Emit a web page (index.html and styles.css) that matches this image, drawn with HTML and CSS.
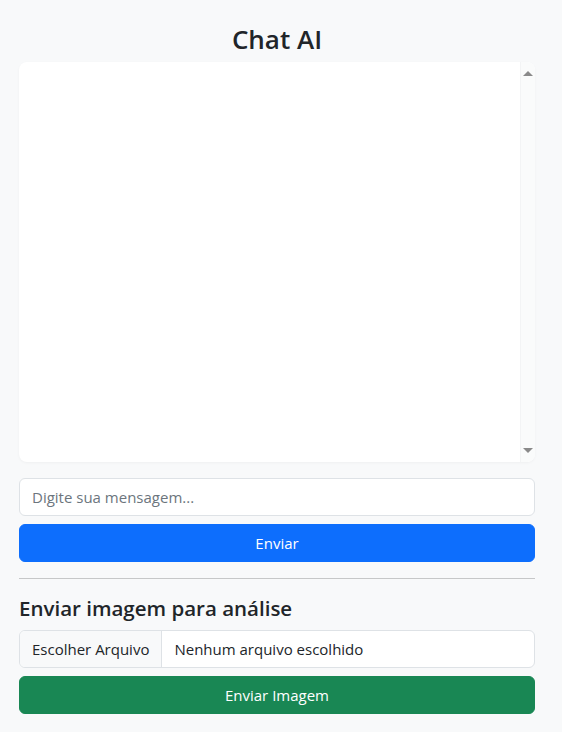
FILE: index.html
```html
<!DOCTYPE html>
<html lang="pt-BR">
<head>
<meta charset="utf-8">
<title>Chat AI</title>
<link rel="stylesheet" href="styles.css">
</head>
<body>
<main class="container">
  <h3 class="title">Chat AI</h3>
  <div class="chat-box">
    <div class="chat-messages"></div>
    <div class="scrollbar" aria-hidden="true">
      <span class="arrow arrow-up"></span>
      <span class="arrow arrow-down"></span>
    </div>
  </div>
  <input class="form-control" type="text" placeholder="Digite sua mensagem...">
  <button class="btn btn-primary">Enviar</button>
  <hr class="divider">
  <h5 class="subtitle">Enviar imagem para análise</h5>
  <div class="file-input">
    <span class="file-btn">Escolher Arquivo</span>
    <span class="file-name">Nenhum arquivo escolhido</span>
  </div>
  <button class="btn btn-success">Enviar Imagem</button>
</main>
</body>
</html>
```
FILE: styles.css
```css
* { box-sizing: border-box; }
html, body { margin: 0; padding: 0; }
body {
  background: #f8f9fa;
  color: #212529;
  font-family: "Open Sans", "Noto Sans", sans-serif;
  font-size: 15px;
  line-height: 1.5;
}
.container {
  width: 516px;
  margin: 0 0 0 19px;
  padding-top: 22px;
  display: flex;
  flex-direction: column;
}
.title {
  margin: 0 0 6px;
  text-align: center;
  font-size: 26px;
  font-weight: 600;
  line-height: 34px;
}
.chat-box {
  height: 400px;
  background: #fff;
  border-radius: 8px;
  box-shadow: 0 1px 3px rgba(0,0,0,0.04);
  overflow: hidden;
  display: flex;
  margin-bottom: 16px;
}
.chat-messages { flex: 1; }
.scrollbar {
  width: 15px;
  background: #fafbfb;
  border-left: 1px solid #f3f4f5;
  display: flex;
  flex-direction: column;
  justify-content: space-between;
  align-items: center;
  padding: 9px 0;
}
.arrow {
  width: 0;
  height: 0;
  border-left: 5px solid transparent;
  border-right: 5px solid transparent;
}
.arrow-up { border-bottom: 5px solid #8a8a8a; }
.arrow-down { border-top: 5px solid #8a8a8a; }
.form-control {
  height: 38px;
  padding: 6px 12px;
  border: 1px solid #dee2e6;
  border-radius: 6px;
  background: #fff;
  font: inherit;
  color: #212529;
  margin-bottom: 8px;
}
.form-control::placeholder { color: #6c757d; opacity: 1; }
.btn {
  height: 38px;
  border: 1px solid transparent;
  border-radius: 6px;
  font: inherit;
  color: #fff;
  cursor: pointer;
}
.btn-primary { background: #0d6efd; border-color: #0d6efd; }
.btn-success { background: #198754; border-color: #198754; }
.divider {
  width: 100%;
  margin: 16px 0;
  border: 0;
  border-top: 1px solid #c6c7c8;
}
.subtitle {
  margin: 0 0 8px;
  font-size: 20.5px;
  font-weight: 600;
  line-height: 27px;
}
.file-input {
  display: flex;
  height: 38px;
  border: 1px solid #dee2e6;
  border-radius: 6px;
  background: #fff;
  overflow: hidden;
  margin-bottom: 8px;
}
.file-btn {
  display: flex;
  align-items: center;
  padding: 0 12px;
  background: #f8f9fa;
  border-right: 1px solid #dee2e6;
  color: #212529;
}
.file-name {
  display: flex;
  align-items: center;
  padding: 0 12px;
}
```
